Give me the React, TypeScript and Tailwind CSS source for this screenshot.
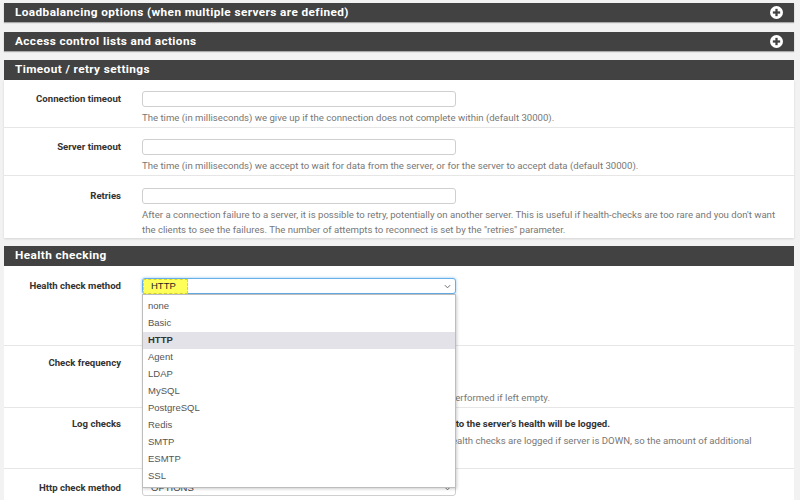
import React from "react";

const font = { fontFamily: "Roboto, 'Liberation Sans', sans-serif" };

function PlusCircle() {
  return (
    <svg width="13" height="13" viewBox="0 0 16 16" className="mr-[11px]">
      <circle cx="8" cy="8" r="8" fill="#ffffff" />
      <rect x="3.5" y="6.6" width="9" height="2.8" fill="#424242" />
      <rect x="6.6" y="3.5" width="2.8" height="9" fill="#424242" />
    </svg>
  );
}

function Header({ title, plus }: { title: string; plus?: boolean }) {
  return (
    <div className="flex h-[19px] items-center justify-between bg-[#424242] pl-[11px] shadow-[0_1px_1px_rgba(0,0,0,0.3)]">
      <span className="text-[11.8px] font-bold tracking-[0.4px] text-white">{title}</span>
      {plus && <PlusCircle />}
    </div>
  );
}

function Label({ children }: { children: React.ReactNode }) {
  return (
    <div className="w-[117px] shrink-0 text-right text-[9.6px] font-bold leading-[16px] text-[#333]">
      {children}
    </div>
  );
}

function TextInput() {
  return <div className="h-[16px] w-[314px] rounded-[3px] border border-[#cfcfcf] bg-white" />;
}

function Help({ children }: { children: React.ReactNode }) {
  return <div className="mt-[3px] text-[9.6px] leading-[15px] text-[#777]">{children}</div>;
}

function Chevron() {
  return (
    <svg width="7" height="5" viewBox="0 0 8 5" className="mr-[4px]">
      <path d="M1 1 L4 4 L7 1" stroke="#666" strokeWidth="1.1" fill="none" />
    </svg>
  );
}

const options = ["none", "Basic", "HTTP", "Agent", "LDAP", "MySQL", "PostgreSQL", "Redis", "SMTP", "ESMTP", "SSL"];

export default function App() {
  return (
    <div style={font} className="h-[500px] w-[800px] overflow-hidden bg-[#f2f2f2] px-[4px] pt-[3px]">
      <div className="w-[790px]">
        <Header title="Loadbalancing options (when multiple servers are defined)" plus />
        <div className="h-[10px]" />
        <Header title="Access control lists and actions" plus />
        <div className="h-[9px]" />
        <div className="flex h-[20px] items-center bg-[#424242] pl-[11px]">
          <span className="text-[11.8px] font-bold tracking-[0.4px] text-white">Timeout / retry settings</span>
        </div>
        <div className="bg-white shadow-[0_1px_2px_rgba(0,0,0,0.12)]">
          <div className="flex h-[48px] gap-[21px] border-b border-[#e6e6e6] pt-[11px]">
            <Label>Connection timeout</Label>
            <div>
              <TextInput />
              <Help>The time (in milliseconds) we give up if the connection does not complete within (default 30000).</Help>
            </div>
          </div>
          <div className="flex h-[48px] gap-[21px] border-b border-[#e6e6e6] pt-[11px]">
            <Label>Server timeout</Label>
            <div>
              <TextInput />
              <Help>The time (in milliseconds) we accept to wait for data from the server, or for the server to accept data (default 30000).</Help>
            </div>
          </div>
          <div className="flex h-[62px] gap-[21px] pt-[12px]">
            <Label>Retries</Label>
            <div className="w-[645px]">
              <TextInput />
              <Help>
                After a connection failure to a server, it is possible to retry, potentially on another server. This is useful if health-checks are too rare and you don't want the clients to see the failures. The number of attempts to reconnect is set by the "retries" parameter.
              </Help>
            </div>
          </div>
        </div>
        <div className="h-[8px]" />
        <div className="flex h-[20px] items-center bg-[#424242] pl-[11px]">
          <span className="text-[11.8px] font-bold tracking-[0.4px] text-white">Health checking</span>
        </div>
        <div className="relative bg-white">
          <div className="flex h-[80px] gap-[21px] border-b border-[#e6e6e6] pt-[12px]">
            <Label>Health check method</Label>
            <div className="relative">
              <div className="flex h-[16px] w-[314px] items-center justify-between rounded-[3px] border border-[#66afe9] bg-white shadow-[0_0_3px_rgba(102,175,233,0.7)]">
                <div className="flex h-[15px] w-[45px] items-center border border-dashed border-[#d8d830] bg-[#ffff5a] pl-[7px] text-[9.5px] text-[#222]" style={{ fontFamily: "'Liberation Sans', Arial, sans-serif" }}>
                  HTTP
                </div>
                <Chevron />
              </div>
            </div>
          </div>
          <div className="flex h-[62px] gap-[21px] border-b border-[#e6e6e6] pt-[9px]">
            <Label>Check frequency</Label>
            <div>
              <div className="h-[17px] w-[314px] rounded-[3px] border border-[#cfcfcf] bg-white" />
              <div className="mt-[3px] text-[9.6px] leading-[15px] text-[#777]">
                The check interval (in milliseconds).
                <br />
                For HTTP/HTTPS defaults to 1000 if left blank. For TCP no check will be performed if left empty.
              </div>
            </div>
          </div>
          <div className="flex h-[61px] gap-[21px] border-b border-[#e6e6e6] pt-[8px]">
            <Label>Log checks</Label>
            <div className="w-[630px]">
              <div className="flex items-center gap-[4px] text-[9.6px] font-bold leading-[16px] text-[#333]">
                <span className="inline-block h-[9px] w-[9px] shrink-0 rounded-[2px] border border-[#999]" />
                <span>When this option is enabled, any change of the health check status or to the server's health will be logged.</span>
              </div>
              <div className="mt-[1px] text-[9.6px] leading-[15px] text-[#777]">
                By default, failed health check are logged if server is UP and successful health checks are logged if server is DOWN, so the amount of additional information is limited.
              </div>
            </div>
          </div>
          <div className="flex h-[40px] gap-[21px] pt-[11px]">
            <Label>Http check method</Label>
            <div className="flex h-[16px] w-[314px] items-center justify-between rounded-[3px] border border-[#cfcfcf] bg-white pl-[8px] text-[9.5px] text-[#444]" style={{ fontFamily: "'Liberation Sans', Arial, sans-serif" }}>
              OPTIONS
              <Chevron />
            </div>
          </div>
          <div
            className="absolute left-[138px] top-[28px] w-[314px] border border-[#bdbdbd] bg-white pb-[2px] pt-[3px] shadow-[1px_1px_3px_rgba(0,0,0,0.2)]"
            style={{ fontFamily: "'Liberation Sans', Arial, sans-serif" }}
          >
            {options.map((o) => (
              <div
                key={o}
                className={
                  o === "HTTP"
                    ? "flex h-[17px] items-center bg-[#e2e2e8] pl-[5px] text-[9.5px] font-bold text-[#333]"
                    : "flex h-[17px] items-center pl-[5px] text-[9.5px] text-[#555]"
                }
              >
                {o}
              </div>
            ))}
          </div>
        </div>
      </div>
    </div>
  );
}
